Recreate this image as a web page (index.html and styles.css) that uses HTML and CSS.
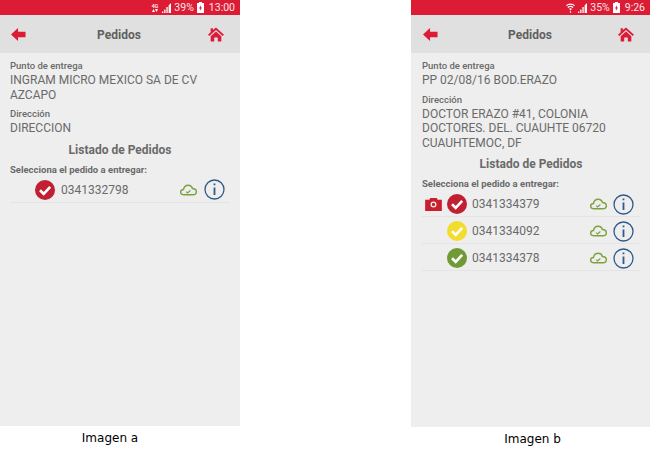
FILE: index.html
```html
<!DOCTYPE html>
<html lang="en">

<head>
    <meta charset="UTF-8">
    <meta name="viewport" content="width=device-width, initial-scale=1.0">
    <title>Pedidos</title>
    <link rel="stylesheet" href="styles.css">
</head>

<body>
    <svg class="defs" width="0" height="0">
        <symbol id="back" viewBox="0 0 16 16"><path d="M0 8 7.500 1V5H15.500V11H7.500V15Z" fill="#de1b36"/></symbol>
        <symbol id="home" viewBox="0 0 18 16"><path d="M3 1H5.500V3L9 0 18 8.300 16.500 9.800 9 3 1.500 9.800 0 8.300 3 5.500Z M9 4.500 15 10V16H11V11.500H7V16H3V10Z" fill="#de1b36"/></symbol>
        <symbol id="check" viewBox="0 0 20 20"><path d="M5 10.200 8.700 13.800 15.200 6.800" fill="none" stroke="#fff" stroke-width="2.600"/></symbol>
        <symbol id="cloud" viewBox="0 0 18 12"><path d="M4.500 11C2.200 11 .7 9.800 .7 8.100 .7 6.500 2 5.400 3.700 5.400 4.200 2.700 6.200 1 8.600 1 10.800 1 12.600 2.400 13.100 4.400 15.500 4.500 17.300 5.900 17.300 7.800 17.300 9.700 15.700 11 13.500 11Z" fill="none" stroke="#7ba23f" stroke-width="1.500"/><path d="M6.500 7.800 8 9.200 11 6.500" fill="none" stroke="#7ba23f" stroke-width="1.200"/></symbol>
        <symbol id="info" viewBox="0 0 21 21"><circle cx="10.500" cy="10.500" r="9.500" fill="none" stroke="#2f5a8c" stroke-width="1.300"/><path d="M9.600 8.500H11.400V16H9.600Z M9.600 4.500H11.400V6.300H9.600Z" fill="#2f5a8c"/></symbol>
        <symbol id="camera" viewBox="0 0 18 14"><path fill-rule="evenodd" d="M0 2H4.500L5.500 0H12.500L13.500 2H18V14H0Z M9 3.800A3.200 3.200 0 1 0 9 10.200 3.200 3.200 0 1 0 9 3.800Z M9 5.200A1.800 1.800 0 1 1 9 8.800 1.800 1.800 0 1 1 9 5.200Z" fill="#c8202f"/></symbol>
        <symbol id="signal" viewBox="0 0 9 10"><path d="M0 10H1.300V8.500H0Z M2.200 10H3.500V6.500H2.200Z M4.400 10H5.700V4H4.400Z M6.600 10H9V0L6.600 2.500Z" fill="#fff"/></symbol>
        <symbol id="battery" viewBox="0 0 7 11"><path fill-rule="evenodd" d="M2 0H5V1H7V11H0V1H2Z M4 3 2 6.500H3.200L2.800 9 5 5.500H3.800Z" fill="#fff"/></symbol>
        <symbol id="wifi" viewBox="0 0 9 10"><path d="M.4 2.600C2.600 .6 6.400 .6 8.600 2.600 M1.800 4.500C3.300 3.200 5.700 3.200 7.200 4.500" fill="none" stroke="#fff" stroke-width="1.100"/><path d="M3 5.800C3.900 5.100 5.100 5.100 6 5.800L4.500 7.500Z M3.900 8.300H5.100V9.800H3.900Z" fill="#fff"/></symbol>
        <symbol id="arrows" viewBox="0 0 6 3"><path d="M1.500 0 3 3H0Z M4.500 3 3 0H6Z" fill="#fff"/></symbol>
    </svg>

    <div class="shots">
        <div class="shot">
            <div class="phone">
                <div class="status-bar">
                    <span class="net-type">4G<svg><use href="#arrows"/></svg></span>
                    <svg class="signal"><use href="#signal"/></svg>
                    <span>39%</span>
                    <svg class="battery"><use href="#battery"/></svg>
                    <span class="clock">13:00</span>
                </div>
                <div class="top-bar">
                    <svg class="back-icon"><use href="#back"/></svg>
                    <span class="top-title">Pedidos</span>
                    <svg class="home-icon"><use href="#home"/></svg>
                </div>
                <div class="content">
                    <div class="field-label">Punto de entrega</div>
                    <div class="field-value">INGRAM MICRO MEXICO SA DE CV<br>AZCAPO</div>
                    <div class="field-label">Dirección</div>
                    <div class="field-value">DIRECCION</div>
                    <div class="list-title">Listado de Pedidos</div>
                    <div class="list-hint">Selecciona el pedido a entregar:</div>
                    <div class="order">
                        <span class="camera-slot"></span>
                        <span class="status red"><svg><use href="#check"/></svg></span>
                        <span class="order-number">0341332798</span>
                        <svg class="cloud"><use href="#cloud"/></svg>
                        <svg class="info"><use href="#info"/></svg>
                    </div>
                </div>
            </div>
            <div class="caption">Imagen a</div>
        </div>

        <div class="shot">
            <div class="phone">
                <div class="status-bar">
                    <svg class="wifi"><use href="#wifi"/></svg>
                    <svg class="signal"><use href="#signal"/></svg>
                    <span>35%</span>
                    <svg class="battery"><use href="#battery"/></svg>
                    <span class="clock">9:26</span>
                </div>
                <div class="top-bar">
                    <svg class="back-icon"><use href="#back"/></svg>
                    <span class="top-title">Pedidos</span>
                    <svg class="home-icon"><use href="#home"/></svg>
                </div>
                <div class="content">
                    <div class="field-label">Punto de entrega</div>
                    <div class="field-value">PP 02/08/16 BOD.ERAZO</div>
                    <div class="field-label">Dirección</div>
                    <div class="field-value">DOCTOR ERAZO #41, COLONIA<br>DOCTORES. DEL. CUAUHTE 06720<br>CUAUHTEMOC, DF</div>
                    <div class="list-title">Listado de Pedidos</div>
                    <div class="list-hint">Selecciona el pedido a entregar:</div>
                    <div class="order">
                        <span class="camera-slot"><svg class="camera"><use href="#camera"/></svg></span>
                        <span class="status red"><svg><use href="#check"/></svg></span>
                        <span class="order-number">0341334379</span>
                        <svg class="cloud"><use href="#cloud"/></svg>
                        <svg class="info"><use href="#info"/></svg>
                    </div>
                    <div class="order">
                        <span class="camera-slot"></span>
                        <span class="status yellow"><svg><use href="#check"/></svg></span>
                        <span class="order-number">0341334092</span>
                        <svg class="cloud"><use href="#cloud"/></svg>
                        <svg class="info"><use href="#info"/></svg>
                    </div>
                    <div class="order">
                        <span class="camera-slot"></span>
                        <span class="status green"><svg><use href="#check"/></svg></span>
                        <span class="order-number">0341334378</span>
                        <svg class="cloud"><use href="#cloud"/></svg>
                        <svg class="info"><use href="#info"/></svg>
                    </div>
                </div>
            </div>
            <div class="caption">Imagen b</div>
        </div>
    </div>
</body>

</html>
```

FILE: styles.css
```css
body, html {
    margin: 0;
    padding: 0;
    width: 100%;
    height: 100%;
    overflow: hidden;
    background: #fff;
    font-family: 'Roboto', sans-serif;
}

.defs {
    display: block;
    height: 0;
}

.shots {
    display: flex;
    justify-content: space-between;
}

.shot {
    width: 240px;
}

.shot:last-child {
    width: 239px;
}

.phone {
    height: 426px;
    display: flex;
    flex-direction: column;
    background: #eee;
}

.shot:last-child .phone {
    height: 427px;
}

.status-bar {
    height: 15px;
    padding-right: 5px;
    display: flex;
    justify-content: flex-end;
    align-items: center;
    gap: 3px;
    background: #dc1c35;
    color: #fbe3e6;
    font-size: 10.500px;
}

.net-type {
    display: flex;
    flex-direction: column;
    align-items: center;
    font-size: 5.500px;
    font-weight: 700;
    line-height: 6px;
    margin-right: 1px;
}

.net-type svg {
    display: block;
    width: 6px;
    height: 3px;
}

.signal {
    width: 9px;
    height: 10px;
}

.battery {
    width: 7px;
    height: 11px;
}

.wifi {
    width: 9px;
    height: 10px;
}

.clock {
    margin-left: 2px;
}

.top-bar {
    height: 38px;
    padding: 1px 16px 0 11px;
    box-sizing: border-box;
    display: flex;
    justify-content: space-between;
    align-items: center;
    background: #e0e0e0;
}

.shot:last-child .top-bar {
    padding-left: 12px;
}

.top-title {
    margin-left: 4px;
    font-size: 12px;
    font-weight: 700;
    color: #5f5f5f;
}

.back-icon {
    width: 15px;
    height: 15px;
}

.home-icon {
    width: 16px;
    height: 15px;
}

.content {
    padding: 6px 10px 0;
    color: #6a6a6a;
}

.shot:last-child .content {
    padding-left: 11px;
}

.field-label {
    font-size: 9.500px;
    font-weight: 500;
    line-height: 14px;
}

.field-value {
    font-size: 12px;
    line-height: 14.500px;
    margin-bottom: 5px;
}

.list-title {
    font-size: 12px;
    font-weight: 700;
    line-height: 16px;
    text-align: center;
    margin-top: 6px;
}

.list-hint {
    font-size: 9.500px;
    font-weight: 700;
    line-height: 12px;
    margin-top: 6px;
}

.order {
    height: 24px;
    padding-top: 2px;
    display: flex;
    align-items: center;
    border-bottom: 1px solid #e4e4e4;
}

.camera-slot {
    width: 25px;
    display: flex;
}

.camera {
    width: 17px;
    height: 13px;
    margin-left: 3px;
}

.status {
    width: 20px;
    height: 20px;
    border-radius: 50%;
    flex: none;
}

.status svg {
    display: block;
    width: 20px;
    height: 20px;
}

.red {
    background: #c11f32;
}

.yellow {
    background: #f2dc2e;
}

.green {
    background: #6f9a36;
}

.order-number {
    flex: 1;
    margin-left: 6px;
    font-size: 12px;
}

.shot:last-child .order-number {
    margin-left: 5px;
}

.cloud {
    width: 17px;
    height: 12px;
    margin-right: 7px;
}

.shot:last-child .cloud {
    margin-right: 6px;
}

.info {
    width: 21px;
    height: 21px;
    margin-right: 5px;
}

.shot:last-child .info {
    margin-right: 6px;
}

.caption {
    margin-top: 5px;
    padding-right: 20px;
    text-align: center;
    font-family: 'DejaVu Sans', sans-serif;
    font-size: 12px;
    line-height: 14px;
    color: #000;
}

.shot:last-child .caption {
    padding: 0 0 0 4px;
}
```
